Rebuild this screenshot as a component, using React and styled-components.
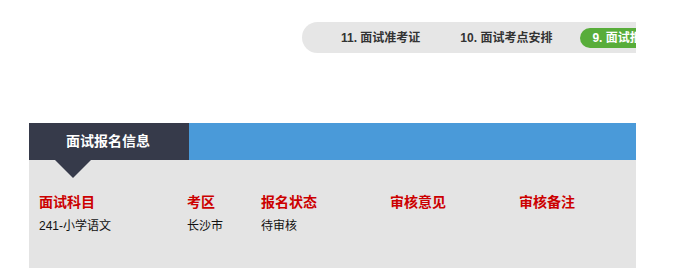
import React from "react";
import styled, { createGlobalStyle } from "styled-components";

const GlobalStyle = createGlobalStyle`
  html, body {
    margin: 0;
    padding: 0;
    background: #fff;
    font-family: "Liberation Sans", "Noto Sans CJK SC", sans-serif;
  }
`;

const App = () => {
  const steps = [
    { id: 11, label: "11. 面试准考证" },
    { id: 10, label: "10. 面试考点安排" },
    { id: 9, label: "9. 面试报名信息", active: true },
  ];

  const columns = [
    { title: "面试科目", value: "241-小学语文", width: 148 },
    { title: "考区", value: "长沙市", width: 74 },
    { title: "报名状态", value: "待审核", width: 129 },
    { title: "审核意见", value: "", width: 129 },
    { title: "审核备注", value: "", width: 117 },
  ];

  return (
    <Page>
      <GlobalStyle />
      <Wrapper>
        <StepsRow>
          <Steps>
            {steps.map((s) => (
              <Step key={s.id} $active={s.active}>
                {s.label}
              </Step>
            ))}
          </Steps>
        </StepsRow>

        <Section>
          <SectionHead>
            <HeadTab>面试报名信息</HeadTab>
          </SectionHead>
          <Panel>
            {columns.map((c) => (
              <Column key={c.title} $width={c.width}>
                <ColTitle>{c.title}</ColTitle>
                <ColValue>{c.value}</ColValue>
              </Column>
            ))}
          </Panel>
        </Section>
      </Wrapper>
    </Page>
  );
};

const Page = styled.div`
  width: 677px;
  height: 280px;
  overflow: hidden;
`;

const Wrapper = styled.div`
  width: 607px;
  margin-left: 29px;
  padding-top: 22px;
`;

const StepsRow = styled.div`
  display: flex;
  justify-content: flex-end;
  overflow: hidden;
  height: 31px;
`;

const Steps = styled.div`
  width: 334px;
  height: 31px;
  flex-shrink: 0;
  background: #e6e6e6;
  border-radius: 16px 0 0 16px;
  display: flex;
  align-items: center;
  padding-left: 27px;
  box-sizing: border-box;
  white-space: nowrap;
`;

const Step = styled.div`
  font-size: 12px;
  font-weight: bold;
  color: ${(p) => (p.$active ? "#fff" : "#333")};
  background: ${(p) => (p.$active ? "#58ad3a" : "transparent")};
  border-radius: 10px;
  height: 20px;
  line-height: 20px;
  padding: 0 12px;
  margin-right: 16px;
  flex-shrink: 0;
`;

const Section = styled.div`
  margin-top: 70px;
`;

const SectionHead = styled.div`
  height: 37px;
  background: #4a9ad9;
  display: flex;
`;

const HeadTab = styled.div`
  position: relative;
  width: 160px;
  height: 37px;
  background: #363a4a;
  color: #fff;
  font-size: 14px;
  font-weight: bold;
  line-height: 37px;
  padding-left: 37px;
  box-sizing: border-box;

  &::after {
    content: "";
    position: absolute;
    left: 26px;
    top: 37px;
    border-left: 18px solid transparent;
    border-right: 18px solid transparent;
    border-top: 18px solid #363a4a;
  }
`;

const Panel = styled.div`
  height: 108px;
  background: #e4e4e4;
  display: flex;
  padding: 32px 0 0 10px;
  box-sizing: border-box;
`;

const Column = styled.div`
  width: ${(p) => p.$width}px;
  display: flex;
  flex-direction: column;
`;

const ColTitle = styled.div`
  color: #cc0000;
  font-size: 14px;
  font-weight: bold;
  line-height: 20px;
  margin-bottom: 4px;
`;

const ColValue = styled.div`
  color: #111;
  font-size: 12px;
  line-height: 20px;
  min-height: 20px;
`;

export default App;
